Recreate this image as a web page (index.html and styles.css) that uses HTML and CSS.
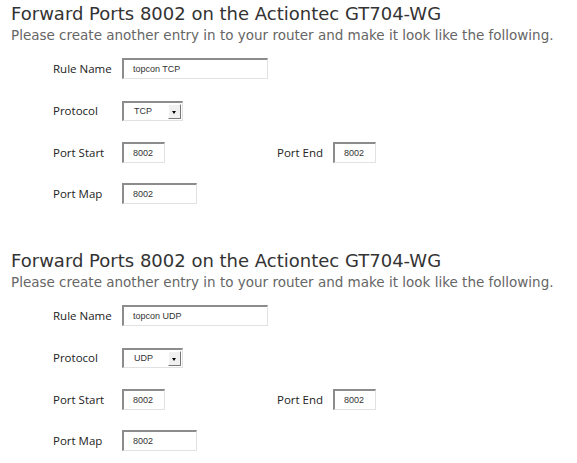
FILE: index.html
```html
<!DOCTYPE html>
<html lang="en">
<head>
  <meta charset="UTF-8">
  <title>Forward Ports 8002</title>
  <meta name="viewport" content="width=device-width, initial-scale=1.0">
  <link rel="stylesheet" href="styles.css">
</head>
<body>

  <div class="section">
    <h2>Forward Ports 8002 on the Actiontec GT704-WG</h2>
    <p class="intro">Please create another entry in to your router and make it look like the following.</p>

    <div class="form">
      <div class="row">
        <span class="label">Rule Name</span>
        <span class="field wide">topcon TCP</span>
      </div>
      <div class="row">
        <span class="label">Protocol</span>
        <span class="field select">TCP<span class="arrow"></span></span>
      </div>
      <div class="row">
        <span class="label">Port Start</span>
        <span class="field short">8002</span>
        <span class="label end">Port End</span>
        <span class="field short">8002</span>
      </div>
      <div class="row">
        <span class="label">Port Map</span>
        <span class="field mid">8002</span>
      </div>
    </div>
  </div>

  <div class="section">
    <h2>Forward Ports 8002 on the Actiontec GT704-WG</h2>
    <p class="intro">Please create another entry in to your router and make it look like the following.</p>

    <div class="form">
      <div class="row">
        <span class="label">Rule Name</span>
        <span class="field wide">topcon UDP</span>
      </div>
      <div class="row">
        <span class="label">Protocol</span>
        <span class="field select">UDP<span class="arrow"></span></span>
      </div>
      <div class="row">
        <span class="label">Port Start</span>
        <span class="field short">8002</span>
        <span class="label end">Port End</span>
        <span class="field short">8002</span>
      </div>
      <div class="row">
        <span class="label">Port Map</span>
        <span class="field mid">8002</span>
      </div>
    </div>
  </div>

</body>
</html>
```

FILE: styles.css
```css
body {
  margin: 0;
  padding: 0 11px;
  background: #fff;
  font-family: "DejaVu Sans", Verdana, sans-serif;
  overflow: hidden;
}

.section {
  height: 247px;
}

.section:last-child {
  height: auto;
}

h2 {
  margin: 0;
  padding-top: 3px;
  font-size: 18px;
  font-weight: normal;
  color: #333;
  line-height: 22px;
}

.intro {
  margin: 1px 0 0;
  font-size: 13.5px;
  line-height: 18px;
  color: #666;
}

.form {
  padding-left: 42px;
  margin-top: 4px;
}

.row {
  display: flex;
  align-items: center;
  height: 41.7px;
}

.label {
  width: 69px;
  font-family: "Open Sans", sans-serif;
  font-size: 11.5px;
  color: #222;
}

.label.end {
  width: 56px;
  margin-left: 112px;
}

.field {
  box-sizing: border-box;
  display: flex;
  align-items: center;
  height: 21px;
  padding-left: 9px;
  border-top: 2px solid #8c8c8c;
  border-left: 2px solid #8c8c8c;
  border-right: 1px solid #e2e2e2;
  border-bottom: 1px solid #e2e2e2;
  font-family: "Liberation Sans", Arial, sans-serif;
  font-size: 9px;
  color: #333;
}

.wide {
  width: 146px;
}

.short {
  width: 43px;
}

.mid {
  width: 75px;
}

.select {
  position: relative;
  width: 61px;
  height: 20px;
  padding-left: 10px;
}

.arrow {
  position: absolute;
  right: 1px;
  top: 1px;
  width: 13px;
  height: 15px;
  box-sizing: border-box;
  background: #f0f0f0;
  border: 1px solid #fff;
  border-right-color: #777;
  border-bottom-color: #777;
}

.arrow::after {
  content: "";
  position: absolute;
  left: 3px;
  top: 6px;
  border-left: 2.5px solid transparent;
  border-right: 2.5px solid transparent;
  border-top: 3px solid #000;
}
```
